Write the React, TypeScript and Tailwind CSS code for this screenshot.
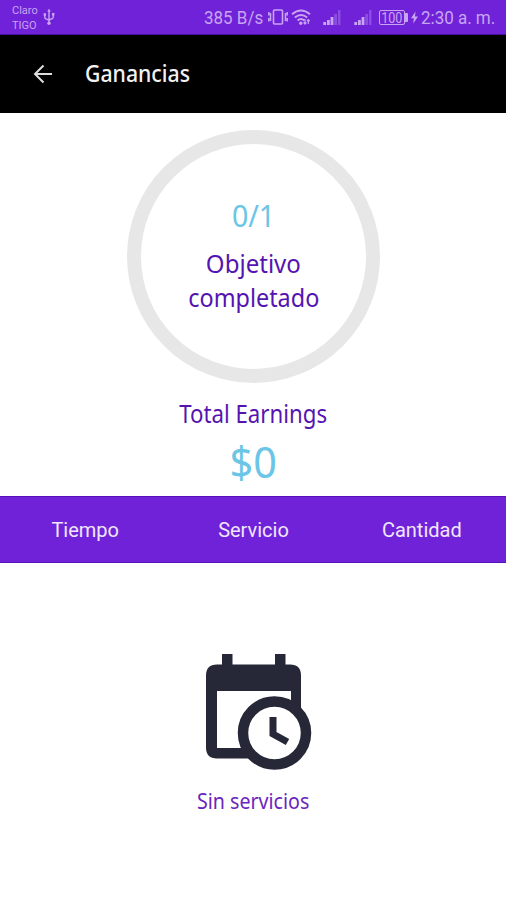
import type { ReactNode } from "react";

const clan = "font-['Noto_Sans',sans-serif]";

function Label({ className = "", children }: { className?: string; children: ReactNode }) {
  return <span className={`block whitespace-nowrap ${className}`}>{children}</span>;
}

function UsbIcon() {
  return (
    <svg className="ml-[4px] h-[18px] w-[12px] shrink-0" viewBox="0 0 12 18" fill="none" stroke="#c9a4f3" strokeWidth="1.4">
      <path d="M6 2v12M1.8 6.5v3q0 1 1 1.4L6 12M10.2 6v3.2q0 1-1 1.4L6 12" />
      <path d="M6 .8 7.8 3.5H4.200zM.6 5.300h2.400v2.400H.6zM9 5h2.400v2.400H9z" fill="#c9a4f3" stroke="none" />
      <circle cx="6" cy="15.2" r="1.7" fill="#c9a4f3" stroke="none" />
    </svg>
  );
}

function VibrateIcon() {
  return (
    <svg className="ml-[2px] h-[18px] w-[20px] shrink-0" viewBox="0 0 20 18" fill="none" stroke="#c9a4f3" strokeWidth="1.6">
      <rect x="5.5" y="2" width="9" height="14" rx="1" />
      <path d="M.8 4v3.500M.8 10v3.500M2.500 5v8M19.200 4v3.500M19.200 10v3.500M17.500 5v8" strokeWidth="1.5" />
    </svg>
  );
}

function WifiIcon() {
  return (
    <svg className="ml-[3px] h-[17px] w-[20px] shrink-0" viewBox="0 0 20 17" fill="none" stroke="#c9a4f3" strokeWidth="1.9">
      <path d="M1 5.2Q10-2.2 19 5.2M3.8 8.4q6.2-5 12.4 0M6.6 11.4q3.400-2.800 6.800 0" />
      <circle cx="9.8" cy="14.2" r="1.7" fill="#c9a4f3" stroke="none" />
      <path d="M14 10v5M12.500 13.400 14 15l1.400-1.600M17.300 15v-4M16 12.200l1.300-1.500 1.400 1.500" strokeWidth="1.2" />
    </svg>
  );
}

function SignalIcon({ className }: { className: string }) {
  return (
    <svg className={`h-[16px] w-[18px] shrink-0 ${className}`} viewBox="0 0 18 16" fill="#c9a4f3">
      <path d="M.3 13h2.800v3H.3zM4 11h2.800v5H4zM7.600 8h2.800v8H7.600z" />
      <path d="M11.200 5H14v11h-2.800zM15 1h2.500v15H15z" opacity=".32" />
    </svg>
  );
}

function Battery() {
  return (
    <div className="ml-[7px] flex shrink-0 items-center">
      <div className="flex h-[15px] w-[26px] items-center justify-center rounded-[2px] border border-[#c9a4f3] text-[14px] leading-none">
        <Label className="scale-x-90 pt-px">100</Label>
      </div>
      <div className="h-[9px] w-[3px] rounded-r-[1px] bg-[#c9a4f3]" />
      <svg className="ml-[3px] h-[13px] w-[7px]" viewBox="0 0 7 12" fill="#c9a4f3">
        <path d="M4.500 0 0 6.800h2.800L2.300 12 7 5H4z" />
      </svg>
    </div>
  );
}

function CalendarClock() {
  return (
    <svg className="h-[118px] w-[108px]" viewBox="0 0 108 118">
      <path fill="#262737" fillRule="evenodd" d="M17 1h10.500v10.500H70V1h10.500v10.500H85q11 0 11 11V75H86V38H12v57h37v10.500H12Q1 105.500 1 94.500V22.500q0-11 11-11h5z" />
      <circle cx="69.500" cy="80" r="31.500" fill="#fff" stroke="#262737" strokeWidth="10.500" />
      <path d="M68 64v17l14.500 8" fill="none" stroke="#262737" strokeWidth="7" />
    </svg>
  );
}

export default function App() {
  return (
    <main className="flex h-[900px] w-[506px] flex-col overflow-hidden bg-white font-[Roboto,sans-serif]">
      <div className="flex h-[35px] shrink-0 items-center border-b border-[#4a0e9c] bg-[#7022d8] pl-[12px] text-[#c9a4f3]">
        <div className="w-[27px] pt-[2px] text-[11px] leading-[15px]">
          <div>Claro</div>
          <div>TIGO</div>
        </div>
        <UsbIcon />
        <Label className="ml-[149px] w-[62px] origin-left scale-x-[.97] pt-[2px] text-[17.5px]">385 B/s</Label>
        <VibrateIcon />
        <WifiIcon />
        <SignalIcon className="ml-[12px]" />
        <SignalIcon className="ml-[13px]" />
        <Battery />
        <Label className="ml-[3px] origin-left scale-x-[.97] pt-[2px] text-[17.5px]">2:30 a. m.</Label>
      </div>

      <header className="flex h-[78px] shrink-0 items-center bg-black pl-[33px] text-[#f2f2f2]">
        <svg className="h-[20px] w-[20px]" viewBox="0 0 20 20" fill="none" stroke="#dedede" strokeWidth="2">
          <path d="M19 10H2M10.500 1.500 2 10l8.500 8.500" />
        </svg>
        <Label className={`ml-[32px] origin-left scale-x-[.885] pb-[3px] text-[24px] font-medium ${clan}`}>Ganancias</Label>
      </header>

      <section className="flex h-[383px] shrink-0 flex-col items-center pt-[17px] pl-px text-[#5514b0]">
        <div className="flex h-[253px] w-[253px] flex-col items-center rounded-full border-[14px] border-[#e7e7e7] pt-[51px]">
          <Label className={`scale-x-[.92] text-[31px] leading-[40px] text-[#6ac5e6] ${clan}`}>0/1</Label>
          <Label className={`mt-[11px] scale-x-[.925] text-[26px] leading-[34px] ${clan}`}>Objetivo</Label>
          <Label className={`scale-x-[.9] text-[26px] leading-[34px] ${clan}`}>completado</Label>
        </div>
        <Label className={`mt-[13px] scale-x-[.89] text-[25px] leading-[34px] ${clan}`}>Total Earnings</Label>
        <Label className={`mt-px scale-x-[.94] text-[44px] leading-[60px] text-[#6ac5e6] ${clan}`}>$0</Label>
      </section>

      <nav className="grid h-[67px] shrink-0 grid-cols-3 items-center border-y border-[#5610b8] bg-[#7022d8] pl-px text-center text-[20px] text-[#f1e6fd]">
        <Label>Tiempo</Label>
        <Label>Servicio</Label>
        <Label>Cantidad</Label>
      </nav>

      <section className="flex flex-1 flex-col items-center pt-[90px] pl-px">
        <div className="ml-[11px]"><CalendarClock /></div>
        <Label className={`mt-[16px] scale-x-[.935] text-[21px] leading-[28px] text-[#6b25be] ${clan}`}>Sin servicios</Label>
      </section>
    </main>
  );
}
